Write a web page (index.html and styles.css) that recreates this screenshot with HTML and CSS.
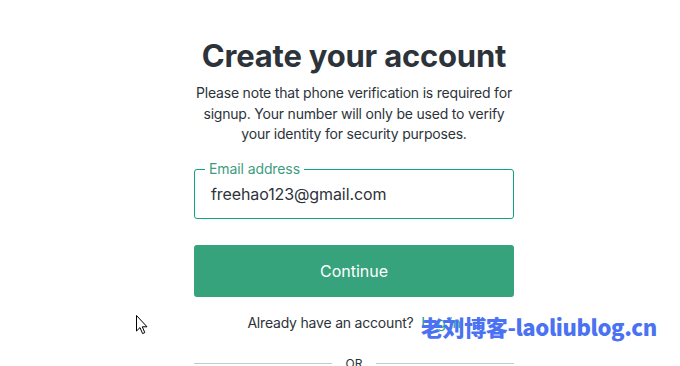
FILE: index.html
```html
<!DOCTYPE html>
<html lang="en">
<head>
<meta charset="utf-8">
<title>Create your account</title>
<link rel="stylesheet" href="styles.css">
</head>
<body>
<div class="page">
  <main class="card">
    <h1 class="title">Create your account</h1>
    <p class="subtitle">Please note that phone verification is required for signup. Your number will only be used to verify your identity for security purposes.</p>
    <div class="field">
      <span class="field-label">Email address</span>
      <div class="field-value">freehao123@gmail.com</div>
    </div>
    <button class="btn">Continue</button>
    <p class="login">Already have an account? <a class="login-link" href="#">Log in</a></p>
    <div class="divider"><span class="line"></span><span class="or">OR</span><span class="line"></span></div>
  </main>
</div>
<div class="watermark">老刘博客-laoliublog.cn</div>
<svg class="cursor" width="13" height="20" viewBox="0 0 13 20"><path d="M0.5 0.5 L0.5 16 L4 12.6 L6.6 18.6 L8.8 17.6 L6.3 11.8 L11 11.8 Z" fill="#fff" stroke="#000" stroke-width="1"/></svg>
</body>
</html>
```
FILE: styles.css
```css
html, body { margin: 0; padding: 0; background: #fff; }
body { width: 680px; height: 366px; overflow: hidden; position: relative; font-family: Inter, "Noto Sans", sans-serif; color: #2d333a; }
.page { display: flex; justify-content: center; padding-left: 28px; padding-top: 36px; }
.card { width: 320px; display: flex; flex-direction: column; align-items: stretch; }
.title { margin: 0; font-size: 31px; line-height: 40px; font-weight: 700; text-align: center; color: #2d333a; letter-spacing: -0.2px; }
.subtitle { margin: 7px 0 0; font-size: 14px; line-height: 20.5px; text-align: center; color: #2d333a; letter-spacing: -0.2px; }
.field { position: relative; margin-top: 24px; height: 50px; border: 1px solid #10a37f; border-radius: 3px; box-sizing: border-box; display: flex; align-items: center; padding-left: 16px; }
.field-label { position: absolute; left: 10px; top: -10px; background: #fff; padding: 0 4px; font-size: 14px; line-height: 18px; color: #3e9c80; letter-spacing: -0.1px; }
.field-value { font-size: 16px; color: #2d333a; letter-spacing: -0.1px; }
.btn { margin-top: 26px; height: 52px; border: none; border-radius: 3px; background: #36a37d; color: #fff; font-family: inherit; font-size: 16px; }
.login { margin: 17px 0 0; font-size: 14px; line-height: 18px; text-align: center; color: #2d333a; letter-spacing: -0.2px; }
.login-link { color: #10a37f; text-decoration: none; margin-left: 4px; }
.divider { margin-top: 24px; display: flex; align-items: center; gap: 14px; }
.line { flex: 1; height: 1px; background: #c2c8d0; }
.or { font-size: 12px; color: #2d333a; line-height: 16px; }
.watermark { position: absolute; left: 421px; top: 313px; font-family: "Noto Sans CJK SC", "Noto Sans", sans-serif; font-weight: 900; font-size: 22px; line-height: 26px; color: #4a72f2; letter-spacing: -0.4px; }
.cursor { position: absolute; left: 136px; top: 315px; }
```
